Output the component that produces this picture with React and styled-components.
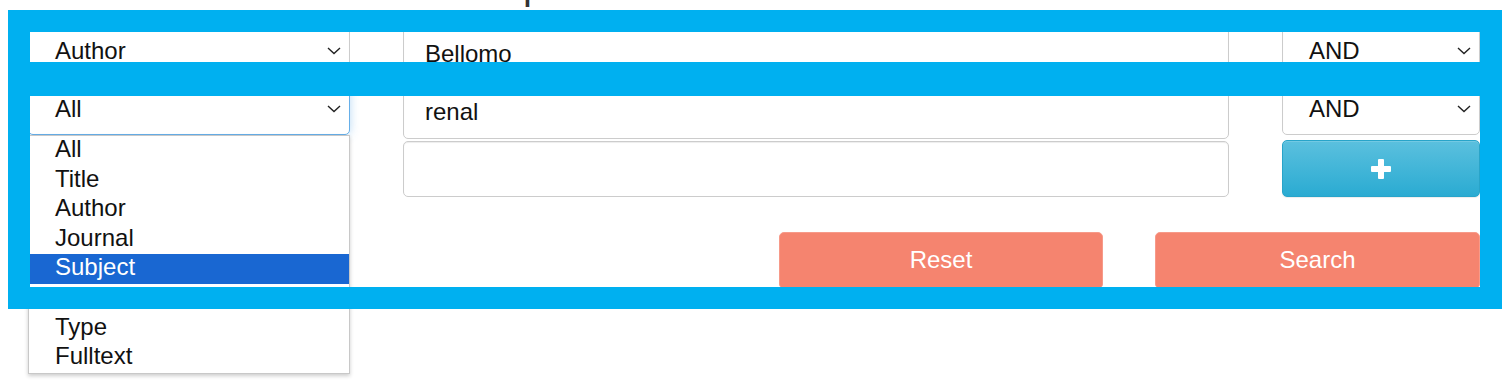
import React from "react";
import styled, { createGlobalStyle } from "styled-components";

const GlobalStyle = createGlobalStyle`
  html, body {
    margin: 0;
    padding: 0;
    background: #ffffff;
    overflow: hidden;
  }
  body {
    font-family: "Liberation Sans", Arial, sans-serif;
    color: #111111;
  }
`;

const fieldOptions = ["All", "Title", "Author", "Journal", "Subject", "Year", "Type", "Fulltext"];

const rows = [
  { field: "Author", term: "Bellomo", op: "AND" },
  { field: "All", term: "renal", op: "AND", open: true },
  { term: "", add: true },
];

const Chevron = () => (
  <ChevronIcon width="14" height="8" viewBox="0 0 14 8">
    <polyline points="1,1 7,6.5 13,1" fill="none" stroke="#222" strokeWidth="1.4" />
  </ChevronIcon>
);

const PlusIcon = () => (
  <svg width="20" height="20" viewBox="0 0 20 20">
    <rect x="7" y="0" width="6" height="20" rx="1" fill="#fff" />
    <rect x="0" y="7" width="20" height="6" rx="1" fill="#fff" />
  </svg>
);

const App = () => {
  return (
    <>
      <GlobalStyle />
      <Page>
        <Heading>Simple Search</Heading>
        <FormArea>
          <Grid>
            {rows.map((row, i) => (
              <React.Fragment key={i}>
                <Cell>
                  {row.field && (
                    <Select $focused={row.open}>
                      <span>{row.field}</span>
                      <Chevron />
                    </Select>
                  )}
                  {row.open && (
                    <OptionList>
                      {fieldOptions.map((opt) => (
                        <OptionItem key={opt} $active={opt === "Subject"}>
                          {opt}
                        </OptionItem>
                      ))}
                    </OptionList>
                  )}
                </Cell>
                <Cell>
                  <TextInput>{row.term}</TextInput>
                </Cell>
                <Cell>
                  {row.add ? (
                    <AddButton>
                      <PlusIcon />
                    </AddButton>
                  ) : (
                    <Select>
                      <span>{row.op}</span>
                      <Chevron />
                    </Select>
                  )}
                </Cell>
              </React.Fragment>
            ))}
          </Grid>
          <Actions>
            <ActionButton>Reset</ActionButton>
            <ActionButton $wide>Search</ActionButton>
          </Actions>
          <Highlight>
            <HighlightBar />
          </Highlight>
        </FormArea>
      </Page>
    </>
  );
};

export default App;

const Page = styled.div`
  width: 1512px;
  height: 380px;
  overflow: hidden;
`;

const Heading = styled.h2`
  margin: -35px 0 0 0;
  padding-left: 454px;
  height: 40px;
  font-size: 40px;
  line-height: 40px;
  font-weight: 400;
  color: #333333;
`;

const FormArea = styled.div`
  position: relative;
  margin-top: 20px;
  padding-left: 28px;
  width: 1452px;
`;

const Grid = styled.div`
  display: grid;
  grid-template-columns: 322px 826px 198px;
  column-gap: 53px;
  row-gap: 2px;
`;

const Cell = styled.div`
  position: relative;
  height: 56px;
`;

const Select = styled.div`
  box-sizing: border-box;
  height: 52px;
  display: flex;
  align-items: center;
  justify-content: space-between;
  padding: 0 8px 0 26px;
  background: #ffffff;
  border: 1px solid ${(p) => (p.$focused ? "#66afe9" : "#cccccc")};
  border-radius: 5px;
  box-shadow: ${(p) =>
    p.$focused
      ? "inset 0 1px 1px rgba(0,0,0,.075), 0 0 10px rgba(102,175,233,.45)"
      : "inset 0 1px 1px rgba(0,0,0,.075)"};
  font-size: 24px;
  color: #111111;
`;

const ChevronIcon = styled.svg`
  display: block;
  flex-shrink: 0;
`;

const TextInput = styled.div`
  box-sizing: border-box;
  height: 56px;
  display: flex;
  align-items: center;
  padding: 2px 21px 0;
  background: #ffffff;
  border: 1px solid #cccccc;
  border-radius: 5px;
  box-shadow: inset 0 1px 1px rgba(0, 0, 0, 0.075);
  font-size: 24px;
  color: #111111;
`;

const OptionList = styled.div`
  position: absolute;
  z-index: 2;
  top: 52px;
  left: 0;
  width: 322px;
  box-sizing: border-box;
  background: #ffffff;
  border: 1px solid #c8c8c8;
  box-shadow: 0 2px 4px rgba(0, 0, 0, 0.2);
`;

const OptionItem = styled.div`
  box-sizing: border-box;
  height: 29.6px;
  line-height: 26.6px;
  padding: 0 0 3px 26px;
  font-size: 24px;
  color: ${(p) => (p.$active ? "#ffffff" : "#111111")};
  background: ${(p) => (p.$active ? "#1967d2" : "transparent")};
`;

const AddButton = styled.div`
  box-sizing: border-box;
  height: 57px;
  margin-top: -1px;
  display: flex;
  align-items: center;
  justify-content: center;
  border: 1px solid #28a4c9;
  border-radius: 5px;
  background: linear-gradient(to bottom, #5bc0de 0%, #2aabd2 100%);
  box-shadow: inset 0 1px 0 rgba(255, 255, 255, 0.15), 0 1px 1px rgba(0, 0, 0, 0.075);
`;

const Actions = styled.div`
  display: flex;
  justify-content: flex-end;
  gap: 52px;
  margin-top: 35px;
`;

const ActionButton = styled.div`
  box-sizing: border-box;
  width: ${(p) => (p.$wide ? "325px" : "324px")};
  height: 57px;
  display: flex;
  align-items: center;
  justify-content: center;
  padding-bottom: 1px;
  background: #f5846f;
  border: 1px solid #f79a89;
  border-radius: 5px;
  color: #ffffff;
  font-size: 24px;
`;

const Highlight = styled.div`
  position: absolute;
  z-index: 5;
  left: 8px;
  top: -15px;
  width: 1494px;
  height: 299px;
  box-sizing: border-box;
  border: 22px solid #00b0f0;
  pointer-events: none;
`;

const HighlightBar = styled.div`
  position: absolute;
  left: 0;
  right: 0;
  top: 30px;
  height: 34px;
  background: #00b0f0;
`;
